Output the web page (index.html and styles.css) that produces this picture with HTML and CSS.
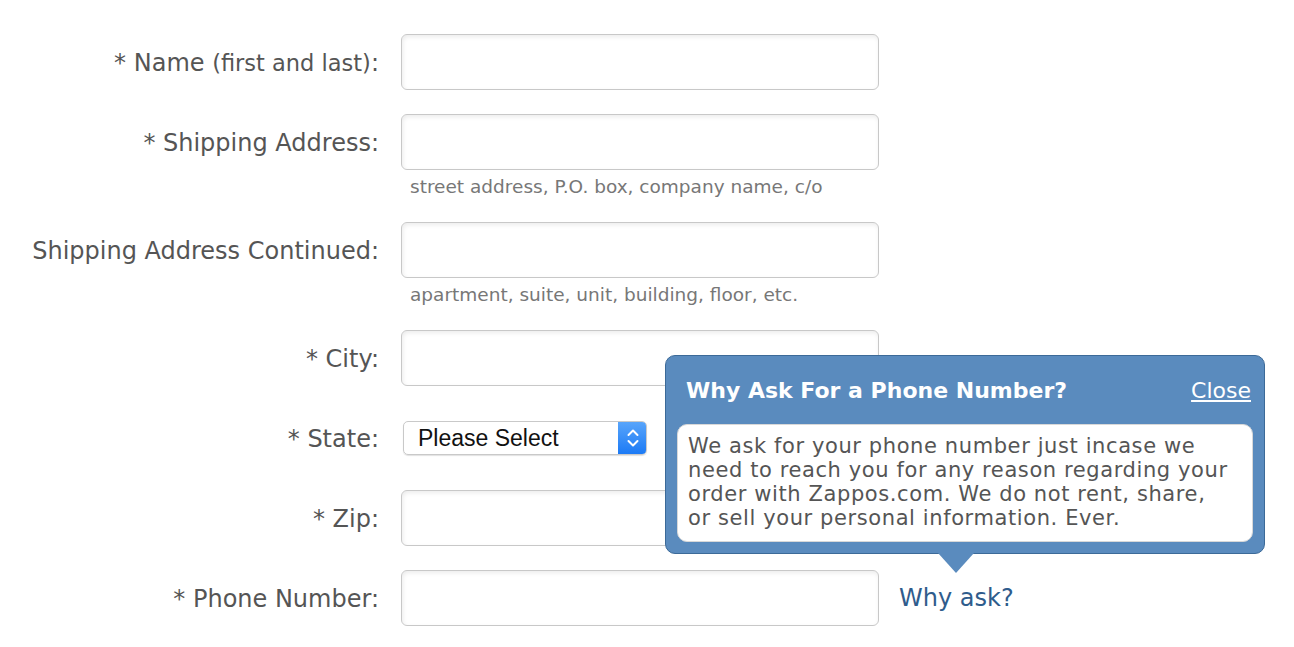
FILE: index.html
```html
<!DOCTYPE html>
<html lang="en">
<head>
  <meta charset="UTF-8">
  <title>Shipping Address</title>
  <link rel="stylesheet" href="styles.css">
</head>
<body>
<div class="page">
  <form class="address-form">
    <label class="label" for="name">* Name <small>(first and last)</small>:</label>
    <div class="field"><input id="name" class="text" type="text"></div>

    <label class="label" for="addr1">* Shipping Address:</label>
    <div class="field">
      <input id="addr1" class="text" type="text">
      <p class="hint">street address, P.O. box, company name, c/o</p>
    </div>

    <label class="label" for="addr2">Shipping Address Continued:</label>
    <div class="field">
      <input id="addr2" class="text" type="text">
      <p class="hint">apartment, suite, unit, building, floor, etc.</p>
    </div>

    <label class="label" for="city">* City:</label>
    <div class="field"><input id="city" class="text" type="text"></div>

    <label class="label" for="state">* State:</label>
    <div class="field select-field">
      <div class="select" id="state">
        <span>Please Select</span>
        <span class="stepper">
          <svg width="14" height="22" viewBox="0 0 14 22"><path d="M2.5 8 L7 3.5 L11.5 8 M2.5 14 L7 18.5 L11.5 14" fill="none" stroke="#fff" stroke-width="2" stroke-linecap="round" stroke-linejoin="round"/></svg>
        </span>
      </div>
    </div>

    <label class="label" for="zip">* Zip:</label>
    <div class="field"><input id="zip" class="text" type="text"></div>

    <label class="label" for="phone">* Phone Number:</label>
    <div class="field phone-field">
      <input id="phone" class="text" type="text">
      <a href="#" class="why">Why ask?</a>
    </div>
  </form>

  <div class="tooltip">
    <div class="tooltip-head">
      <h2>Why Ask For a Phone Number?</h2>
      <a href="#" class="close">Close</a>
    </div>
    <div class="tooltip-body">
      We ask for your phone number just incase we need to reach you for any reason regarding your order with Zappos.com. We do not rent, share, or sell your personal information. Ever.
    </div>
  </div>
</div>
</body>
</html>
```

FILE: styles.css
```css
* { box-sizing: border-box; margin: 0; padding: 0; }
body {
  font-family: 'DejaVu Sans', sans-serif;
  background: #fff;
  color: #555;
}
.page {
  position: relative;
  width: 1294px;
  height: 647px;
}
.address-form {
  display: grid;
  grid-template-columns: 379px 478px;
  column-gap: 22px;
  row-gap: 24px;
  padding-top: 34px;
  align-items: start;
}
.label {
  font-size: 24px;
  text-align: right;
  height: 56px;
  line-height: 58px;
  color: #555;
  white-space: nowrap;
}
.label small { font-size: 22.5px; }
.field { display: flex; flex-direction: column; }
.text {
  flex: none;
  width: 478px;
  height: 56px;
  border: 1px solid #c8c8c8;
  border-radius: 6px;
  box-shadow: inset 1px 2px 4px rgba(0, 0, 0, 0.08);
  background: #fff;
}
.hint {
  font-size: 18.5px;
  color: #777;
  padding: 6px 0 0 9px;
  height: 28px;
  line-height: 22px;
  white-space: nowrap;
}
.select-field { height: 56px; justify-content: center; padding-left: 2px; }
.select {
  width: 244px;
  height: 34px;
  display: flex;
  align-items: center;
  justify-content: space-between;
  border: 1px solid #c9c9c9;
  border-radius: 5px;
  box-shadow: 0 1px 1px rgba(0, 0, 0, 0.12);
  font-family: 'Liberation Sans', Arial, sans-serif;
  font-size: 23px;
  color: #111;
  padding-left: 14px;
  overflow: hidden;
}
.stepper {
  width: 29px;
  height: 34px;
  margin-right: -1px;
  background: linear-gradient(#5aa6fb, #1a79f5);
  display: flex;
  align-items: center;
  justify-content: center;
  border-radius: 0 5px 5px 0;
}
.phone-field { flex-direction: row; align-items: center; }
.why {
  margin-left: 20px;
  font-size: 24px;
  color: #2f5c8c;
  text-decoration: none;
  white-space: nowrap;
}
.tooltip {
  position: absolute;
  left: 665px;
  top: 355px;
  width: 600px;
  height: 199px;
  background: #5a8bbe;
  border: 1px solid #3c6a98;
  border-radius: 10px;
  padding: 0 11px 10px;
}
.tooltip::after {
  content: "";
  position: absolute;
  left: 272px;
  bottom: -20px;
  border-left: 18px solid transparent;
  border-right: 18px solid transparent;
  border-top: 20px solid #5a8bbe;
}
.tooltip-head {
  display: flex;
  justify-content: space-between;
  align-items: center;
  height: 68px;
  padding: 0 2px 0 9px;
}
.tooltip-head h2 {
  font-size: 22px;
  font-weight: bold;
  color: #fff;
}
.close {
  color: #fff;
  font-size: 22px;
}
.tooltip-body {
  background: #fff;
  border: 1px solid #d8d8d8;
  border-radius: 10px;
  padding: 9px 20px 11px 10px;
  font-size: 21px;
  letter-spacing: 0.6px;
  line-height: 24px;
  color: #555;
}
```
